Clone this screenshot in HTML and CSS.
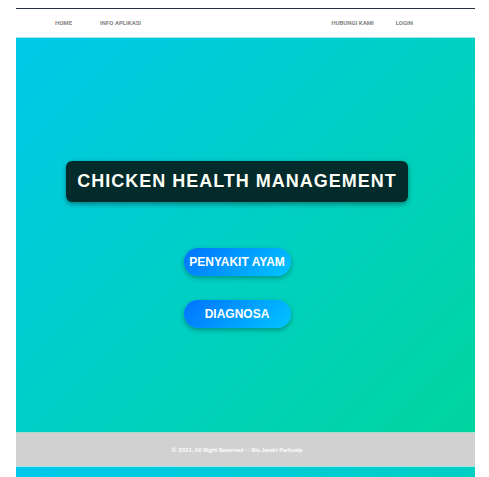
FILE: index.html
```
<!DOCTYPE html>
<html lang="id">
<head>
<meta charset="utf-8">
<meta name="viewport" content="width=device-width, initial-scale=1">
<title>Chicken Health Management</title>
<link rel="stylesheet" href="styles.css">
</head>
<body>
<div class="page">
  <header class="navbar">
    <nav class="nav-group">
      <a href="#home">HOME</a>
      <a href="#info">INFO APLIKASI</a>
    </nav>
    <nav class="nav-group nav-group-end">
      <a href="#kontak">HUBUNGI KAMI</a>
      <a href="#login">LOGIN</a>
    </nav>
  </header>
  <main class="hero">
    <h1 class="title">CHICKEN HEALTH MANAGEMENT</h1>
    <a class="action" href="#penyakit">PENYAKIT AYAM</a>
    <a class="action" href="#diagnosa">DIAGNOSA</a>
  </main>
  <footer class="footer">© 2021. All Right Reserved - : Rio Jandri Parhusip</footer>
</div>
</body>
</html>
```
FILE: styles.css
```
* {
  box-sizing: border-box;
}

body {
  margin: 0;
  padding: 8px 14px 0 16px;
  background: #fff;
  font-family: "Liberation Sans", Arial, sans-serif;
}

a {
  color: inherit;
  text-decoration: none;
}

.page {
  display: flex;
  flex-direction: column;
  min-height: calc(100vh - 8px);
  padding-bottom: 10px;
  background: linear-gradient(135deg, #00c8ec, #00d69c) 0 0 / 100% calc(100% - 10px);
}

.navbar {
  display: flex;
  justify-content: space-between;
  align-items: center;
  height: 30px;
  padding: 0 62px 2px 39px;
  border-top: 1px solid #26303d;
  border-bottom: 1px solid #a9e2e4;
  background: #fff;
  color: #858585;
  font-family: Roboto, sans-serif;
  font-size: 6px;
  font-weight: 700;
}

.nav-group {
  display: flex;
  gap: 28px;
}

.nav-group-end {
  gap: 22px;
}

.hero {
  flex: 1;
  display: flex;
  flex-direction: column;
  align-items: center;
  justify-content: center;
  gap: 24px;
  padding: 18px 17px 0 0;
  color: #fff;
}

.title {
  margin: 0 0 22px;
  padding: 0 11px;
  border-radius: 6px;
  background: #032b2b;
  box-shadow: 0 2px 5px rgba(0, 0, 0, 0.4);
  color: #fdfff6;
  font-size: 18px;
  line-height: 41px;
  letter-spacing: 1px;
  white-space: nowrap;
}

.action {
  width: 107px;
  border-radius: 14px;
  background: linear-gradient(135deg, #0072ff, #00c6ff);
  box-shadow: 0 2px 5px rgba(0, 0, 0, 0.3);
  font-size: 12px;
  font-weight: 700;
  line-height: 28px;
  text-align: center;
  white-space: nowrap;
}

.footer {
  padding-right: 17px;
  border-top: 1px solid #a9dccf;
  border-bottom: 1px solid #a9e2e4;
  background: #d1d1d1;
  color: #fff;
  font-family: Lato, sans-serif;
  font-size: 6px;
  font-weight: 700;
  line-height: 33px;
  text-align: center;
}
```
